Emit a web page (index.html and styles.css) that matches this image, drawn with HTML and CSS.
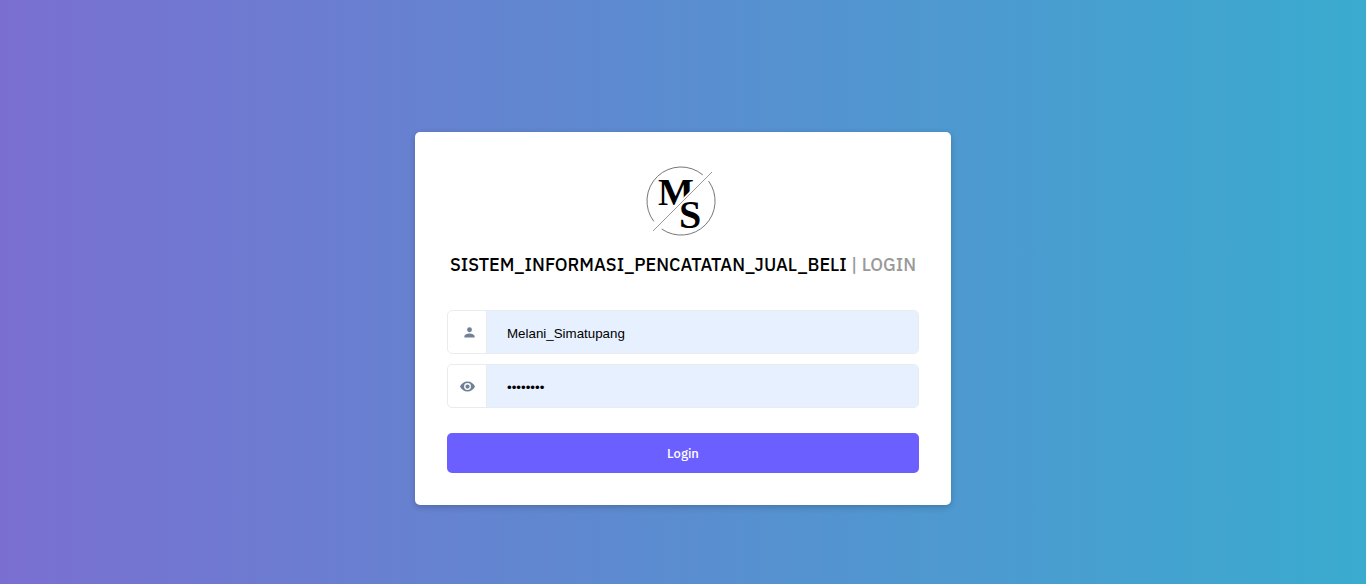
FILE: index.html
```html
<!DOCTYPE html>
<html lang="id">
<head>
<meta charset="utf-8">
<meta name="viewport" content="width=device-width, initial-scale=1">
<title>Login</title>
<link rel="stylesheet" href="styles.css">
</head>
<body class="page">
<main class="card">
  <svg class="logo" viewBox="0 0 74 70" role="img" aria-label="MS">
    <defs>
      <clipPath id="upper"><path d="M0 0H69L0 69Z"/></clipPath>
      <clipPath id="lower"><path d="M70 4V70H4Z"/></clipPath>
    </defs>
    <path class="ring" d="M7.8 55.4A34 34 0 0 1 56.8 8.900M62.600 15.100A34 34 0 0 1 15.700 63"/>
    <path class="slash" d="M7 65L66 6"/>
    <g clip-path="url(#upper)"><text class="mono" x="12" y="39" font-size="38">M</text></g>
    <g clip-path="url(#lower)"><text class="mono" x="33" y="62" font-size="40">S</text></g>
  </svg>
  <h1 class="title">SISTEM_INFORMASI_PENCATATAN_JUAL_BELI <span class="muted">| LOGIN</span></h1>
  <form class="form">
    <div class="field">
      <label class="addon addon-user" for="user" aria-label="Username">
        <svg class="icon" viewBox="0 0 24 24"><path d="M12 11.500a4.500 4.500 0 1 0 0-9 4.500 4.500 0 0 0 0 9zM12 14c-4 0-9.500 1.800-9.500 5.500V21h19v-1.500C21.500 15.800 16 14 12 14z"/></svg>
      </label>
      <input class="input" id="user" type="text" value="Melani_Simatupang">
    </div>
    <div class="field">
      <label class="addon" for="pass" aria-label="Password">
        <svg class="icon icon-eye" viewBox="0 0 24 24"><path fill-rule="evenodd" d="M12 4C6.500 4 2 7.300 0 12c2 4.700 6.500 8 12 8s10-3.300 12-8c-2-4.700-6.500-8-12-8zM12 17.500a5.500 5.500 0 1 1 0-11 5.500 5.500 0 0 1 0 11zM12 8.600a3.400 3.400 0 1 0 0 6.800 3.400 3.400 0 0 0 0-6.800z"/></svg>
      </label>
      <input class="input" id="pass" type="password" value="password">
    </div>
    <button class="button" type="button">Login</button>
  </form>
</main>
</body>
</html>
```
FILE: styles.css
```css
* { box-sizing: border-box; }
.page {
  margin: 0;
  min-height: 100vh;
  padding: 132px 16px 32px;
  background: linear-gradient(90deg, #7a6fd1, #3aabcf);
  font-family: "IBM Plex Sans", "Noto Sans", sans-serif;
}
.card {
  max-width: 536px;
  margin: 0 auto;
  padding: 34px 32px 32px;
  background: #fff;
  border-radius: 5px;
  box-shadow: 0 2px 6px rgba(0, 0, 0, 0.2);
}
.logo {
  display: block;
  width: 74px;
  height: 70px;
  margin: 0 auto;
}
.ring { fill: none; stroke: #777; stroke-width: 1; }
.slash { fill: none; stroke: #999; stroke-width: 1; }
.mono { font-family: "Liberation Serif", serif; font-weight: 700; }
.title {
  margin: 15px 0 31px;
  font-size: 18px;
  line-height: 28px;
  font-weight: 500;
  color: #000;
  text-align: center;
}
.muted { color: #999; }
.form { display: flex; flex-direction: column; gap: 10px; }
.field {
  display: flex;
  height: 44px;
  border: 1px solid #e9ecef;
  border-radius: 5px;
  overflow: hidden;
}
.addon {
  display: flex;
  flex: 0 0 39px;
  align-items: center;
  justify-content: center;
  border-right: 1px solid #e9ecef;
}
.addon-user { padding-left: 5px; }
.icon { width: 13px; height: 13px; fill: #718096; }
.icon-eye { width: 15px; height: 15px; }
.input {
  flex: 1;
  min-width: 0;
  padding: 3px 20px 0;
  border: 0;
  outline: 0;
  background: #e7f0fe;
  color: #000;
  font-family: "Liberation Sans", Arial, sans-serif;
}
.button {
  height: 40px;
  margin-top: 15px;
  border: 0;
  border-radius: 5px;
  background: #6c5fff;
  color: #fff;
  font: 500 13px "IBM Plex Sans", "Noto Sans", sans-serif;
}
```
